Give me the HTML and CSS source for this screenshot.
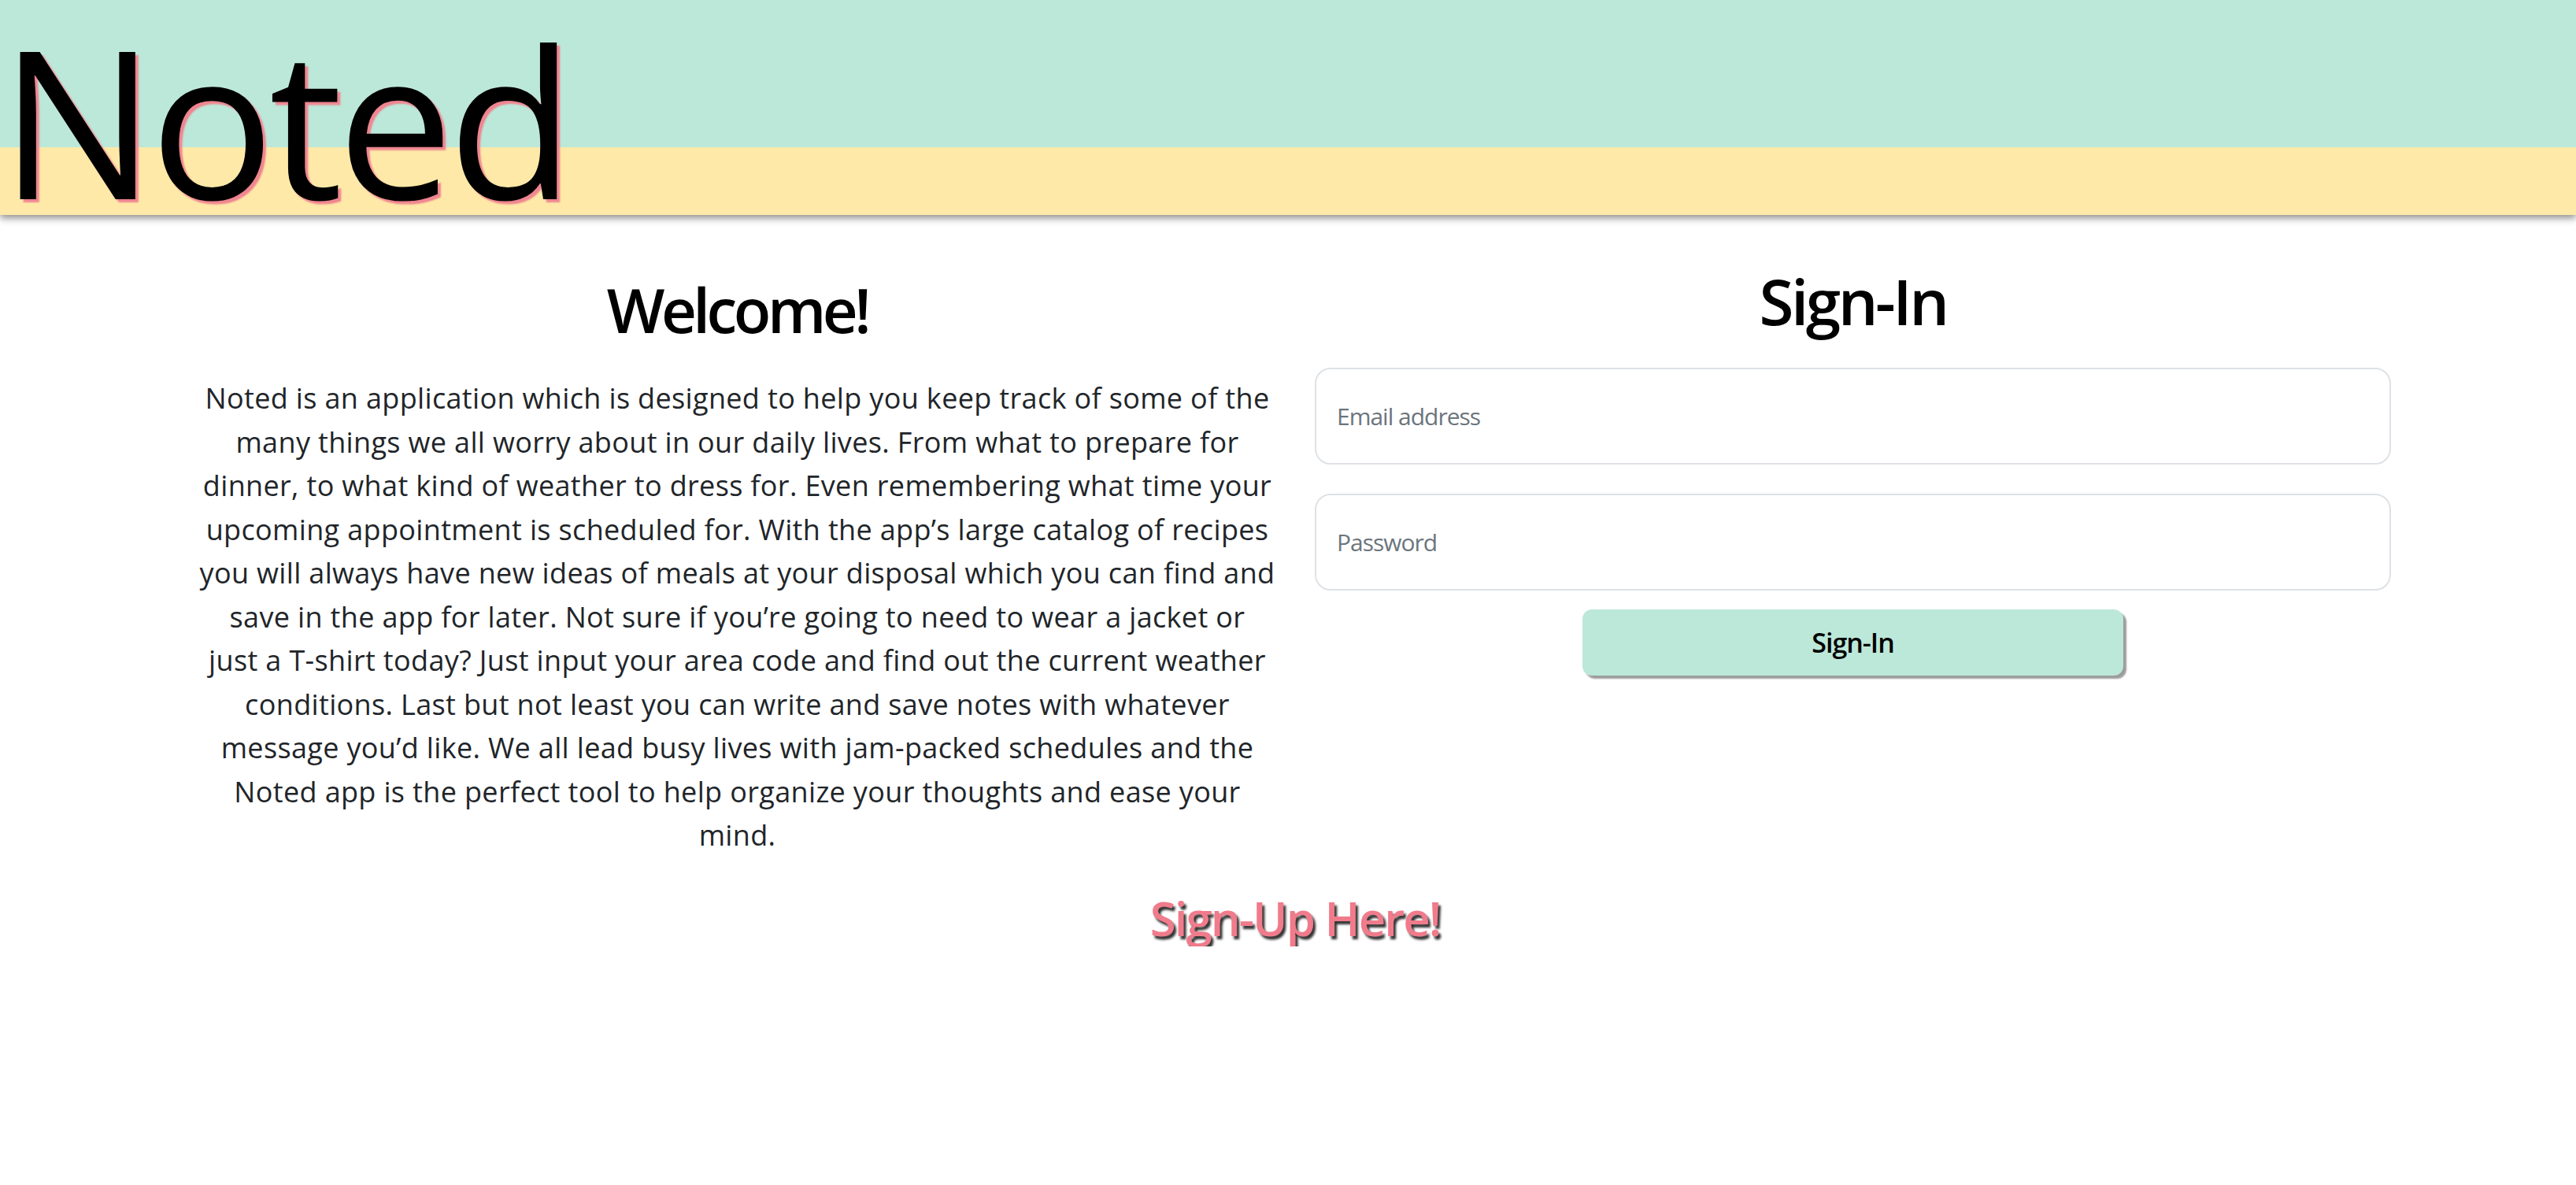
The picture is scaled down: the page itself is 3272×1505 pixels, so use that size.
FILE: index.html
```html
<!DOCTYPE html>
<html lang="en">
<head>
<meta charset="utf-8">
<title>Noted</title>
<link rel="stylesheet" href="styles.css">
</head>
<body>
<header class="topbar">
  <h1 class="brand">Noted</h1>
</header>
<main class="page">
  <div class="columns">
    <section class="intro">
      <h2 class="intro-title">Welcome!</h2>
      <p class="intro-text">Noted is an application which is designed to help you keep track of some of the<br>
      many things we all worry about in our daily lives. From what to prepare for<br>
      dinner, to what kind of weather to dress for. Even remembering what time your<br>
      upcoming appointment is scheduled for. With the app’s large catalog of recipes<br>
      you will always have new ideas of meals at your disposal which you can find and<br>
      save in the app for later. Not sure if you’re going to need to wear a jacket or<br>
      just a T-shirt today? Just input your area code and find out the current weather<br>
      conditions. Last but not least you can write and save notes with whatever<br>
      message you’d like. We all lead busy lives with jam-packed schedules and the<br>
      Noted app is the perfect tool to help organize your thoughts and ease your<br>
      mind.</p>
    </section>
    <section class="signin">
      <h2 class="signin-title">Sign-In</h2>
      <form class="signin-form">
        <input class="field" type="email" placeholder="Email address">
        <input class="field" type="password" placeholder="Password">
        <button class="signin-btn" type="button">Sign-In</button>
      </form>
    </section>
  </div>
  <a class="signup-link" href="#">Sign-Up Here!</a>
</main>
</body>
</html>
```
FILE: styles.css
```css
html, body {
  margin: 0;
  padding: 0;
  background: #ffffff;
}
body {
  font-family: "Open Sans", "Noto Sans", sans-serif;
  color: #212529;
}
.topbar {
  height: 273px;
  background: linear-gradient(to bottom, #bce8d9 0, #bce8d9 187px, #fee9a8 187px, #fee9a8 100%);
  box-shadow: 0 4px 9px rgba(0, 0, 0, 0.45);
  position: relative;
  z-index: 1;
}
.brand {
  margin: 0;
  padding: 31px 0 0 0;
  font-size: 262px;
  font-weight: 400;
  line-height: 242px;
  letter-spacing: -6.5px;
  color: #000;
  text-shadow: 4px 4px 2px #ef8590;
}
.page {
  padding: 60px 235px 0 253px;
  display: flex;
  flex-direction: column;
  align-items: center;
}
.columns {
  display: flex;
  gap: 50px;
  align-items: flex-start;
  width: 100%;
}
.intro, .signin {
  flex: 0 0 1367px;
  min-width: 0;
  display: flex;
  flex-direction: column;
  align-items: center;
}
.intro-title {
  margin: 13px 0 0;
  font-size: 78px;
  line-height: 94px;
  font-weight: 600;
  letter-spacing: -4.5px;
  color: #000;
}
.intro-text {
  margin: 38px 0 0;
  font-size: 36px;
  line-height: 55.5px;
  letter-spacing: 0.35px;
  text-align: center;
  color: #212529;
  white-space: nowrap;
}
.signin-title {
  margin: 1px 0 0;
  font-size: 80px;
  line-height: 96px;
  font-weight: 600;
  letter-spacing: -3.5px;
  color: #000;
}
.signin-form {
  margin-top: 37px;
  width: 100%;
  display: flex;
  flex-direction: column;
  align-items: center;
}
.field {
  box-sizing: border-box;
  width: 100%;
  height: 123px;
  border: 2px solid #dee2e6;
  border-radius: 20px;
  padding: 0 26px;
  font-family: "Open Sans", "Noto Sans", sans-serif;
  font-size: 30px;
  letter-spacing: -1px;
  color: #212529;
  background: #fff;
  margin: 0 0 37px;
}
.field:last-of-type {
  margin-bottom: 24px;
}
.field::placeholder {
  color: #6c757d;
  opacity: 1;
}
.signin-btn {
  width: 687px;
  height: 84px;
  border: none;
  border-radius: 12px;
  background: #bce8d9;
  box-shadow: 4px 4px 2px #9c9c9c;
  font-family: "Open Sans", "Noto Sans", sans-serif;
  font-size: 34px;
  font-weight: 600;
  letter-spacing: -1px;
  color: #000;
}
.signup-link {
  margin-top: 41px;
  font-size: 60px;
  line-height: 72px;
  font-weight: 600;
  letter-spacing: -2px;
  color: #f07b8b;
  text-decoration: none;
  text-shadow: 3px 4px 3px #333;
}
```
